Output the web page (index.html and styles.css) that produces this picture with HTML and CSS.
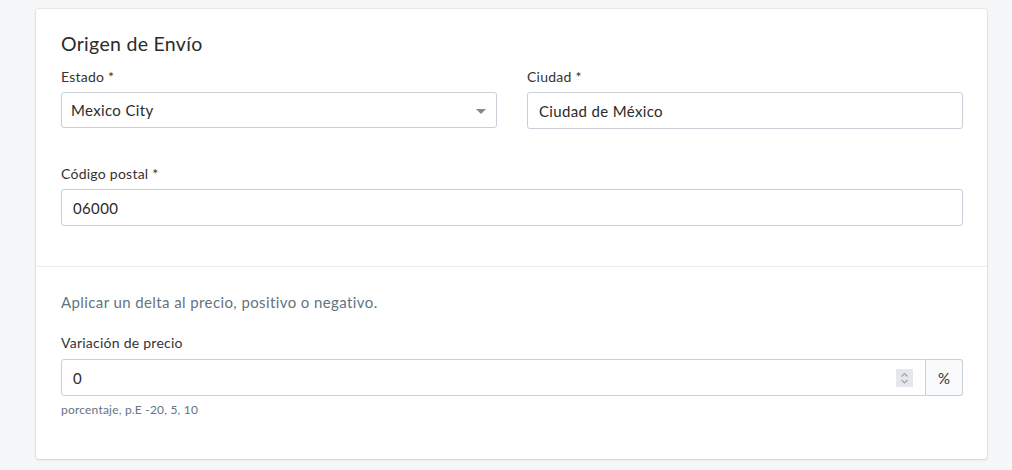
FILE: index.html
```html
<!DOCTYPE html>
<html lang="es">
<head>
<meta charset="utf-8">
<link rel="stylesheet" href="styles.css">
</head>
<body>
<div class="card">
  <section class="section">
    <h2 class="title">Origen de Envío</h2>
    <div class="row">
      <div class="field">
        <label class="label">Estado *</label>
        <div class="control select">
          <span class="value">Mexico City</span>
          <span class="caret"></span>
        </div>
      </div>
      <div class="field">
        <label class="label">Ciudad *</label>
        <div class="control input">
          <span class="value">Ciudad de México</span>
        </div>
      </div>
    </div>
    <div class="field full">
      <label class="label">Código postal *</label>
      <div class="control input">
        <span class="value">06000</span>
      </div>
    </div>
  </section>
  <section class="section second">
    <p class="desc">Aplicar un delta al precio, positivo o negativo.</p>
    <div class="field">
      <label class="label">Variación de precio</label>
      <div class="group">
        <div class="control input grow">
          <span class="value">0</span>
          <span class="spinner">
            <svg width="17" height="18" viewBox="0 0 17 18"><path d="M5.5 7.5 L8.5 4.5 L11.5 7.5" fill="none" stroke="#9da3ad" stroke-width="1.2"/><path d="M5.5 11 L8.5 14 L11.5 11" fill="none" stroke="#9da3ad" stroke-width="1.2"/></svg>
          </span>
        </div>
        <div class="addon">%</div>
      </div>
      <p class="help">porcentaje, p.E -20, 5, 10</p>
    </div>
  </section>
</div>
</body>
</html>
```
FILE: styles.css
```css
* { box-sizing: border-box; }
html, body { margin: 0; padding: 0; }
body {
  background: #f6f7f9;
  font-family: "Lato", "Liberation Sans", sans-serif;
  color: #333;
  padding: 9px 25px 10px 36px;
  width: 1012px;
}
.card {
  background: #fff;
  border-radius: 3px;
  box-shadow: 0 0 0 1px rgba(63,63,68,0.06), 0 1px 3px rgba(63,63,68,0.15);
}
.section {
  padding: 23px 24px 0 25px;
  height: 257px;
}
.second {
  border-top: 1px solid #ebeef0;
  height: 193px;
  padding-top: 24px;
}
.title {
  margin: 0;
  font-size: 19.5px;
  font-weight: 400;
  line-height: 24px;
  letter-spacing: 0.3px;
  color: #2b2b2b;
  height: 24px;
}
.row {
  display: flex;
  gap: 30px;
  margin-top: 13px;
}
.row .field { flex: 1; }
.field { display: flex; flex-direction: column; }
.full { margin-top: 37px; }
.label {
  font-size: 14px;
  line-height: 16px;
  letter-spacing: 0.25px;
  color: #333;
  margin-bottom: 7px;
}
.control {
  display: flex;
  align-items: center;
  height: 37px;
  border: 1px solid #c9cfd6;
  border-radius: 3px;
  background: #fff;
  font-size: 15px;
  letter-spacing: 0.35px;
  color: #2b2b2b;
}
.select { height: 36px; padding: 0 10px 0 9px; }
.input { padding: 0 12px 0 11px; }
.value { flex: 1; }
.caret {
  width: 0; height: 0;
  border-left: 5px solid transparent;
  border-right: 5px solid transparent;
  border-top: 5px solid #888;
  margin-top: 2px;
}
.desc {
  margin: 0;
  font-size: 15px;
  letter-spacing: 0.4px;
  line-height: 22px;
  color: #637381;
  height: 22px;
}
.second .field { margin-top: 22px; }
.second .label { margin-bottom: 8px; }
.group { display: flex; }
.grow {
  flex: 1;
  border-radius: 3px 0 0 3px;
  padding-right: 12px;
}
.spinner {
  display: flex;
  align-items: center;
  justify-content: center;
  width: 17px;
  height: 18px;
  background: #e6e7ec;
}
.addon {
  width: 37px;
  height: 37px;
  border: 1px solid #c9cfd6;
  border-left: none;
  border-radius: 0 3px 3px 0;
  background: #f9fafb;
  display: flex;
  align-items: center;
  justify-content: center;
  font-size: 15px;
  color: #333;
}
.help {
  margin: 6px 0 0 0;
  font-size: 12px;
  letter-spacing: 0.2px;
  line-height: 16px;
  color: #637381;
}
```
